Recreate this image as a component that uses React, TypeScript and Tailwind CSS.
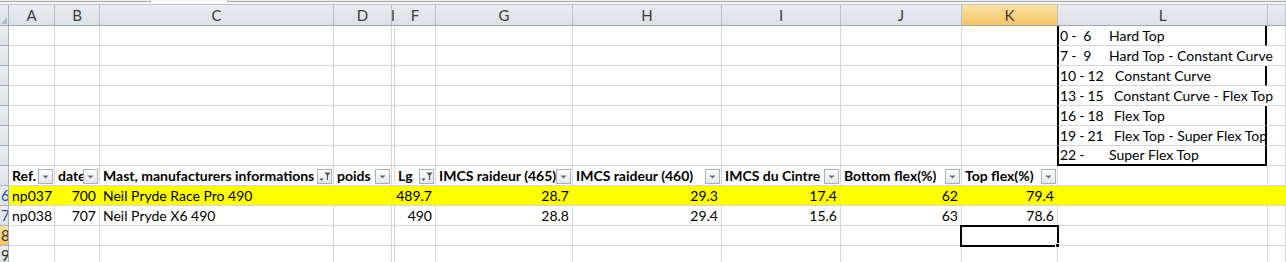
import type { ReactNode } from 'react'

type Col = { id: string; w: string; letter: string }

// Sheet columns, row header first. E is hidden (3px sliver).
const COLS: Col[] = [
  { id: 'rh', w: 'w-[9px]', letter: '' },
  { id: 'A', w: 'w-[46px]', letter: 'A' },
  { id: 'B', w: 'w-[45px]', letter: 'B' },
  { id: 'C', w: 'w-[234px]', letter: 'C' },
  { id: 'D', w: 'w-[58px]', letter: 'D' },
  { id: 'E', w: 'w-[3px]', letter: '' },
  { id: 'F', w: 'w-[41px]', letter: 'F' },
  { id: 'G', w: 'w-[137px]', letter: 'G' },
  { id: 'H', w: 'w-[149px]', letter: 'H' },
  { id: 'I', w: 'w-[119px]', letter: 'I' },
  { id: 'J', w: 'w-[121px]', letter: 'J' },
  { id: 'K', w: 'w-[96px]', letter: 'K' },
  { id: 'L', w: 'w-[210px]', letter: 'L' },
  { id: 'M', w: 'w-[18px]', letter: '' },
]

const LEGEND = [
  { lo: '0', hi: '6', label: 'Hard Top', pad: 'w-[49px]', edge: true },
  { lo: '7', hi: '9', label: 'Hard Top - Constant Curve', pad: 'w-[49px]', edge: false },
  { lo: '10', hi: '12', label: 'Constant Curve', pad: 'w-[55px]', edge: true },
  { lo: '13', hi: '15', label: 'Constant Curve - Flex Top', pad: 'w-[54px]', edge: false },
  { lo: '16', hi: '18', label: 'Flex Top', pad: 'w-[54px]', edge: true },
  { lo: '19', hi: '21', label: 'Flex Top - Super Flex Top', pad: 'w-[54px]', edge: true },
  { lo: '22', hi: '', label: 'Super Flex Top', pad: 'w-[49px]', edge: true },
]

const HEADERS: Record<string, { text: string; filtered?: boolean }> = {
  A: { text: 'Ref.' },
  B: { text: 'date' },
  C: { text: 'Mast, manufacturers informations', filtered: true },
  D: { text: 'poids' },
  F: { text: 'Lg', filtered: true },
  G: { text: 'IMCS raideur (465)' },
  H: { text: 'IMCS raideur (460)' },
  I: { text: 'IMCS du Cintre' },
  J: { text: 'Bottom flex(%)' },
  K: { text: 'Top flex(%)' },
}

const MASTS = [
  { row: '6', A: 'np037', B: '700', C: 'Neil Pryde Race Pro 490', F: '489.7', G: '28.7', H: '29.3', I: '17.4', J: '62', K: '79.4', hi: true },
  { row: '7', A: 'np038', B: '707', C: 'Neil Pryde X6 490', F: '490', G: '28.8', H: '29.4', I: '15.6', J: '63', K: '78.6', hi: false },
]

const LEFT_COLS = ['A', 'C']

function FilterButton({ filtered }: { filtered?: boolean }): JSX.Element {
  return (
    <span className="shrink-0 w-[15px] h-[15px] border border-[#a9b0b9] bg-gradient-to-b from-white to-[#e2e6eb] flex items-center justify-center">
      {filtered ? (
        <svg width="13" height="13" viewBox="0 0 13 13">
          <path d="M1.5 8.5h4l-2 2.5z" fill="#505050" />
          <path d="M6.5 2.5h6l-2.4 3v4.5h-1.2v-4.5z" fill="#505050" />
        </svg>
      ) : (
        <svg width="9" height="9" viewBox="0 0 9 9">
          <path d="M1.5 3.5h6l-3 3z" fill="#6a6a6a" />
        </svg>
      )}
    </span>
  )
}

function Cell({ col, children, className = '' }: { col: Col; children?: ReactNode; className?: string }): JSX.Element {
  return (
    <div className={`${col.w} shrink-0 h-full border-r border-[#d6d6d6] ${className}`}>{children}</div>
  )
}

function RowHead({ label, active, blue }: { label?: string; active?: boolean; blue?: boolean }): JSX.Element {
  return (
    <div
      className={`w-[9px] shrink-0 h-full border-r border-b border-[#a7b1bd] flex items-end pb-[1px] text-[15px] leading-[17px] overflow-hidden ${
        active ? 'bg-gradient-to-b from-[#fbe2a4] to-[#f3c463]' : 'bg-gradient-to-b from-[#eaedf1] to-[#dde2e8]'
      } ${blue ? 'text-[#2d4ea6]' : 'text-[#333]'}`}
    >
      <span className="pl-[1px]">{label}</span>
    </div>
  )
}

export default function App(): JSX.Element {
  return (
    <div className="w-[1286px] h-[262px] overflow-hidden bg-white text-black font-['Lato','Liberation_Sans',sans-serif] text-[14px]">
      {/* strip above the column letters */}
      <div className="h-[1px] bg-[#eeeeee] flex">
        <div className="ml-[150px] w-[78px] h-[2px] bg-[#f7f7f7] border-x border-[#bdbdbd]" />
      </div>
      <div className="h-[1px] bg-[#a9a9a9]" />
      <div className="h-[2px] bg-[#f6f6f6]" />
      <div className="h-[1px] bg-[#c2c2c2]" />

      {/* column letters */}
      <div className="flex h-[21px] border-b border-[#9ea7b2]">
        {COLS.map((c) => {
          if (c.id === 'rh') {
            return (
              <div key={c.id} className="w-[9px] shrink-0 border-r border-[#a7b1bd] bg-gradient-to-b from-[#e9ecf0] to-[#dce1e7] flex items-end">
                <svg width="8" height="10" viewBox="0 0 8 10">
                  <path d="M1 9h6V2z" fill="#b6bcc4" />
                </svg>
              </div>
            )
          }
          if (c.id === 'E') {
            return (
              <div key={c.id} className="w-[3px] shrink-0 bg-gradient-to-b from-[#e9ecf0] to-[#dce1e7] flex items-center">
                <div className="w-[2px] h-[11px] bg-[#6b6b6b]" />
              </div>
            )
          }
          const active = c.id === 'K'
          return (
            <div
              key={c.id}
              className={`${c.w} shrink-0 border-r border-[#bcc3cc] flex items-center justify-center text-[15px] text-[#3c3c3c] ${
                active ? 'bg-gradient-to-b from-[#fbe2a4] to-[#f3c463]' : 'bg-gradient-to-b from-[#e9ecf0] to-[#dce1e7]'
              }`}
            >
              {c.letter}
            </div>
          )
        })}
      </div>

      {/* legend rows */}
      {LEGEND.map((l, i) => (
        <div key={i} className="flex h-[20px]">
          <RowHead />
          {COLS.slice(1).map((c) => {
            if (c.id === 'L') {
              return (
                <div
                  key={c.id}
                  className={`w-[210px] shrink-0 h-full -ml-[1px] mr-[1px] border-l-2 border-black flex items-end pb-[1px] pl-[1px] whitespace-nowrap leading-[17px] ${
                    l.edge ? 'border-r-2' : 'border-r-2 border-r-transparent'
                  } ${i === LEGEND.length - 1 ? 'border-b-2' : 'border-b border-b-[#d6d6d6]'}`}
                >
                  <span className={`${l.pad} shrink-0 flex`}>
                    <span>{l.lo}</span>
                    <span className="ml-[3px]">-</span>
                    {l.hi && <span className={l.lo.length > 1 ? 'ml-[3px]' : 'ml-[7px]'}>{l.hi}</span>}
                  </span>
                  <span>{l.label}</span>
                </div>
              )
            }
            return <Cell key={c.id} col={c} className="border-b border-[#d6d6d6]" />
          })}
        </div>
      ))}

      {/* table header row */}
      <div className="flex h-[20px]">
        <RowHead />
        {COLS.slice(1).map((c) => {
          const h = HEADERS[c.id]
          return (
            <Cell key={c.id} col={c} className="border-b border-[#d6d6d6]">
              {h && (
                <div className="h-full flex items-end justify-between pl-[3px] pr-[1px] pb-[1px] font-bold leading-[17px]">
                  <span className="min-w-0 overflow-hidden whitespace-nowrap">{h.text}</span>
                  <FilterButton filtered={h.filtered} />
                </div>
              )}
            </Cell>
          )
        })}
      </div>

      {/* data rows */}
      {MASTS.map((m) => (
        <div key={m.row} className={`flex h-[20px] ${m.hi ? 'bg-[#ffff00]' : ''}`}>
          <RowHead label={m.row} blue />
          {COLS.slice(1).map((c) => {
            const v = (m as Record<string, unknown>)[c.id] as string | undefined
            const left = LEFT_COLS.includes(c.id)
            return (
              <Cell
                key={c.id}
                col={c}
                className={m.hi ? 'border-r-transparent border-b border-b-[#d6d6d6]' : 'border-b border-[#d6d6d6]'}
              >
                {v && (
                  <div className={`h-full flex items-end pb-[1px] px-[3px] leading-[17px] whitespace-nowrap ${left ? 'justify-start' : 'justify-end'}`}>
                    {v}
                  </div>
                )}
              </Cell>
            )
          })}
        </div>
      ))}

      {/* row 8 with the active cell in K */}
      <div className="flex h-[20px]">
        <RowHead label="8" active />
        {COLS.slice(1).map((c) =>
          c.id === 'K' ? (
            <div key={c.id} className="w-[99px] shrink-0 h-[22px] -mt-[1px] -ml-[2px] -mr-[1px] border-2 border-black relative bg-white z-10">
              <span className="absolute -right-[3px] -bottom-[3px] w-[5px] h-[5px] bg-black border border-white" />
            </div>
          ) : (
            <Cell key={c.id} col={c} className="border-b border-[#d6d6d6]" />
          )
        )}
      </div>

      {/* row 9 */}
      <div className="flex h-[20px]">
        <RowHead label="9" />
        {COLS.slice(1).map((c) => (
          <Cell key={c.id} col={c} className="border-b border-[#d6d6d6]" />
        ))}
      </div>
    </div>
  )
}
